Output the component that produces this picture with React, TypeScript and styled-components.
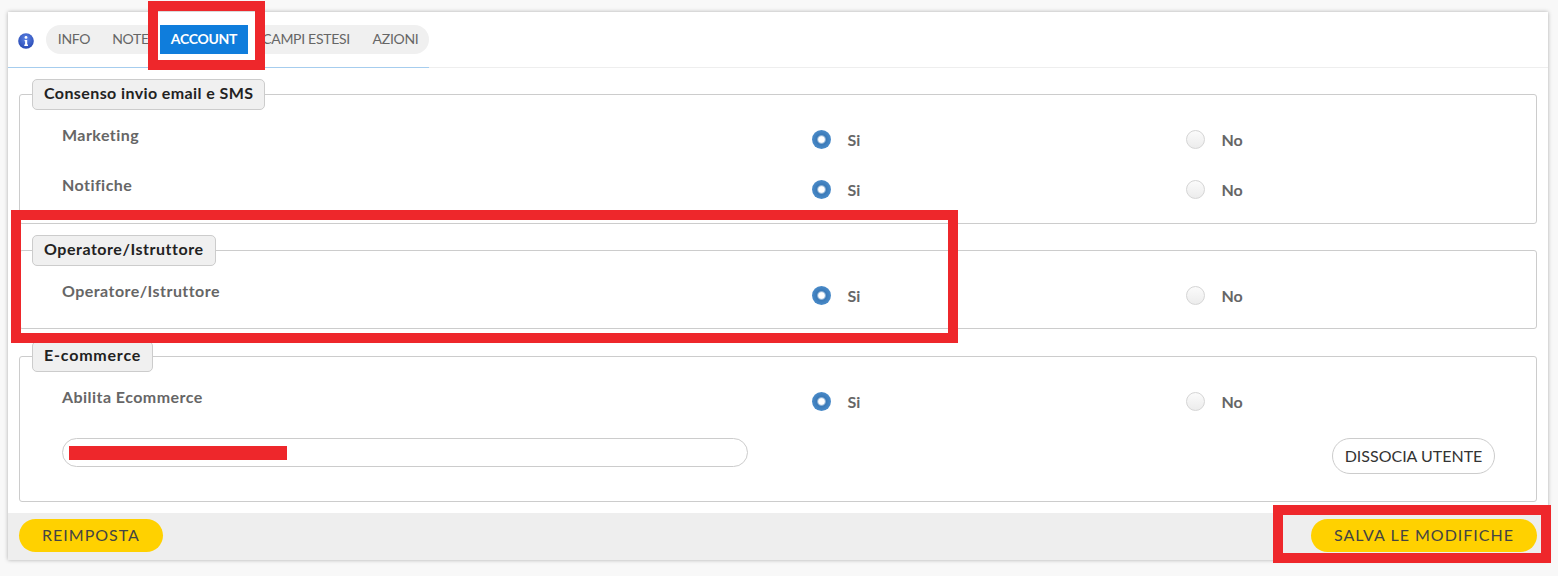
import React from "react";
import styled, { createGlobalStyle } from "styled-components";

const Global = createGlobalStyle`
  html, body { margin: 0; padding: 0; background: #f8f8f8; }
  body { font-family: "Lato", "Open Sans", sans-serif; }
`;

const Page = styled.div`
  position: relative;
  width: 1558px;
  height: 576px;
  padding: 12px 10px 16px 8px;
  box-sizing: border-box;
  overflow: hidden;
`;

const Card = styled.div`
  width: 1540px;
  height: 548px;
  background: #fff;
  box-shadow: 0 0 4px rgba(0, 0, 0, 0.3);
  display: flex;
  flex-direction: column;
`;

const Header = styled.div`
  height: 56px;
  box-sizing: border-box;
  padding: 13px 0 0 10px;
  border-bottom: 1px solid #eee;
  display: flex;
  align-items: flex-start;
  position: relative;
`;

const HeaderRule = styled.div`
  position: absolute;
  left: 0;
  bottom: -1px;
  width: 421px;
  height: 1px;
  background: #a6cdee;
`;

const InfoIcon = styled.svg`
  width: 16px;
  height: 16px;
  margin-top: 8px;
  margin-right: 12px;
  flex: none;
`;

const Tabs = styled.div`
  display: flex;
  align-items: center;
  width: 383px;
  height: 29px;
  border-radius: 15px;
  background: #f0f0f0;
  padding-left: 1px;
  box-sizing: border-box;
`;

const Tab = styled.div<{ $w: number; $active?: boolean }>`
  width: ${(p) => p.$w}px;
  height: 29px;
  line-height: 28px;
  text-align: center;
  font-size: 14px;
  letter-spacing: -0.3px;
  white-space: nowrap;
  color: ${(p) => (p.$active ? "#fff" : "#666")};
  background: ${(p) => (p.$active ? "#0f7ddc" : "transparent")};
  font-weight: ${(p) => (p.$active ? 700 : 400)};
  box-shadow: ${(p) => (p.$active ? "-2px 0 0 #fff, 7px 0 0 #fff" : "none")};
`;

const Body = styled.div`
  flex: 1;
  padding: 26px 11px 0 11px;
  display: flex;
  flex-direction: column;
`;

const Group = styled.div<{ $h: number; $mb: number }>`
  position: relative;
  height: ${(p) => p.$h}px;
  margin-bottom: ${(p) => p.$mb}px;
  box-sizing: border-box;
  border: 1px solid #ccc;
  border-radius: 3px;
`;

const Legend = styled.div<{ $ls: number }>`
  position: absolute;
  left: 12px;
  top: -16px;
  height: 31px;
  line-height: 26px;
  box-sizing: border-box;
  padding: 0 11px;
  background: #f0f0f0;
  border: 1px solid #ccc;
  border-radius: 5px;
  font-size: 16px;
  letter-spacing: ${(p) => p.$ls}px;
  font-weight: 700;
  color: #222;
  white-space: nowrap;
`;

const Rows = styled.div`
  padding-top: 27px;
  display: flex;
  flex-direction: column;
`;

const Row = styled.div<{ $h: number }>`
  height: ${(p) => p.$h}px;
  display: grid;
  grid-template-columns: 750px 374px 1fr;
  padding-left: 42px;
`;

const Label = styled.div`
  font-size: 16px;
  letter-spacing: 0.45px;
  font-weight: 700;
  color: #666;
  line-height: 25px;
`;

const Option = styled.div`
  display: flex;
  align-items: center;
  height: 19px;
  margin-top: 8px;
  gap: 16.5px;
  font-size: 16px;
  font-weight: 700;
  color: #666;
`;

const Radio = styled.span<{ $on?: boolean }>`
  width: 19px;
  height: 19px;
  border-radius: 50%;
  box-sizing: border-box;
  flex: none;
  ${(p) =>
    p.$on
      ? `background: radial-gradient(circle at 50% 50%, #fff 0 2.8px, #3b7ab8 4.8px, #4a8bc9 9.5px);`
      : `background: linear-gradient(#fbfbfb, #ececec); border: 1px solid #d5d5d5;`}
`;

const AccountRow = styled.div`
  display: flex;
  justify-content: space-between;
  padding: 4px 41px 0 42px;
`;

const Field = styled.div`
  width: 686px;
  height: 29px;
  box-sizing: border-box;
  border: 1px solid #ccc;
  border-radius: 15px;
  background: #fff;
`;

const Outline = styled.div`
  width: 163px;
  height: 36px;
  box-sizing: border-box;
  border: 1px solid #ccc;
  border-radius: 18px;
  background: #fff;
  color: #333;
  font-size: 16px;
  line-height: 34px;
  text-align: center;
  white-space: nowrap;
`;

const Footer = styled.div`
  height: 47px;
  background: #eee;
  display: flex;
  justify-content: space-between;
  align-items: flex-start;
  padding: 6px 11px 0;
  box-sizing: border-box;
`;

const Yellow = styled.div<{ $w: number }>`
  width: ${(p) => p.$w}px;
  height: 33px;
  border-radius: 17px;
  background: #ffd100;
  color: #444;
  font-size: 16px;
  letter-spacing: 1px;
  line-height: 32px;
  text-align: center;
  white-space: nowrap;
`;

const Mark = styled.div<{ $l: number; $t: number; $w: number; $h: number }>`
  position: absolute;
  left: ${(p) => p.$l}px;
  top: ${(p) => p.$t}px;
  width: ${(p) => p.$w}px;
  height: ${(p) => p.$h}px;
  box-sizing: border-box;
  border: 10px solid #ee272b;
`;

const Redact = styled.div`
  position: absolute;
  left: 69px;
  top: 446px;
  width: 218px;
  height: 14px;
  background: #ee272b;
`;

const YesNo = () => (
  <>
    <Option>
      <Radio $on />
      Si
    </Option>
    <Option>
      <Radio />
      No
    </Option>
  </>
);

export default function App() {
  return (
    <Page>
      <Global />
      <Card>
        <Header>
          <InfoIcon viewBox="0 0 16 16">
            <defs>
              <radialGradient id="ig" cx="50%" cy="35%" r="70%">
                <stop offset="0" stopColor="#5f86e6" />
                <stop offset="1" stopColor="#2344b0" />
              </radialGradient>
            </defs>
            <circle cx="8" cy="8" r="7.8" fill="url(#ig)" />
            <circle cx="8" cy="4.4" r="1.4" fill="#fff" />
            <path d="M6.6 7H9.2V11.6H10V12.9H6.3V11.6H7.1V8.2H6.6Z" fill="#fff" />
          </InfoIcon>
          <Tabs>
            <Tab $w={54}>INFO</Tab>
            <Tab $w={59}>NOTE</Tab>
            <Tab $w={88} $active>ACCOUNT</Tab>
            <Tab $w={116}>CAMPI ESTESI</Tab>
            <Tab $w={63}>AZIONI</Tab>
          </Tabs>
          <HeaderRule />
        </Header>
        <Body>
          <Group $h={130} $mb={26}>
            <Legend $ls={0.4}>Consenso invio email e SMS</Legend>
            <Rows>
              <Row $h={50}>
                <Label>Marketing</Label>
                <YesNo />
              </Row>
              <Row $h={50}>
                <Label>Notifiche</Label>
                <YesNo />
              </Row>
            </Rows>
          </Group>
          <Group $h={79} $mb={27}>
            <Legend $ls={0.53}>Operatore/Istruttore</Legend>
            <Rows>
              <Row $h={50}>
                <Label>Operatore/Istruttore</Label>
                <YesNo />
              </Row>
            </Rows>
          </Group>
          <Group $h={146} $mb={0}>
            <Legend $ls={0.8}>E-commerce</Legend>
            <Rows>
              <Row $h={50}>
                <Label>Abilita Ecommerce</Label>
                <YesNo />
              </Row>
            </Rows>
            <AccountRow>
              <Field />
              <Outline>DISSOCIA UTENTE</Outline>
            </AccountRow>
          </Group>
        </Body>
        <Footer>
          <Yellow $w={144}>REIMPOSTA</Yellow>
          <Yellow $w={226}>SALVA LE MODIFICHE</Yellow>
        </Footer>
      </Card>
      <Redact />
      <Mark $l={148} $t={1} $w={117} $h={69} />
      <Mark $l={11} $t={210} $w={947} $h={133} />
      <Mark $l={1273} $t={505} $w={278} $h={58} />
    </Page>
  );
}
